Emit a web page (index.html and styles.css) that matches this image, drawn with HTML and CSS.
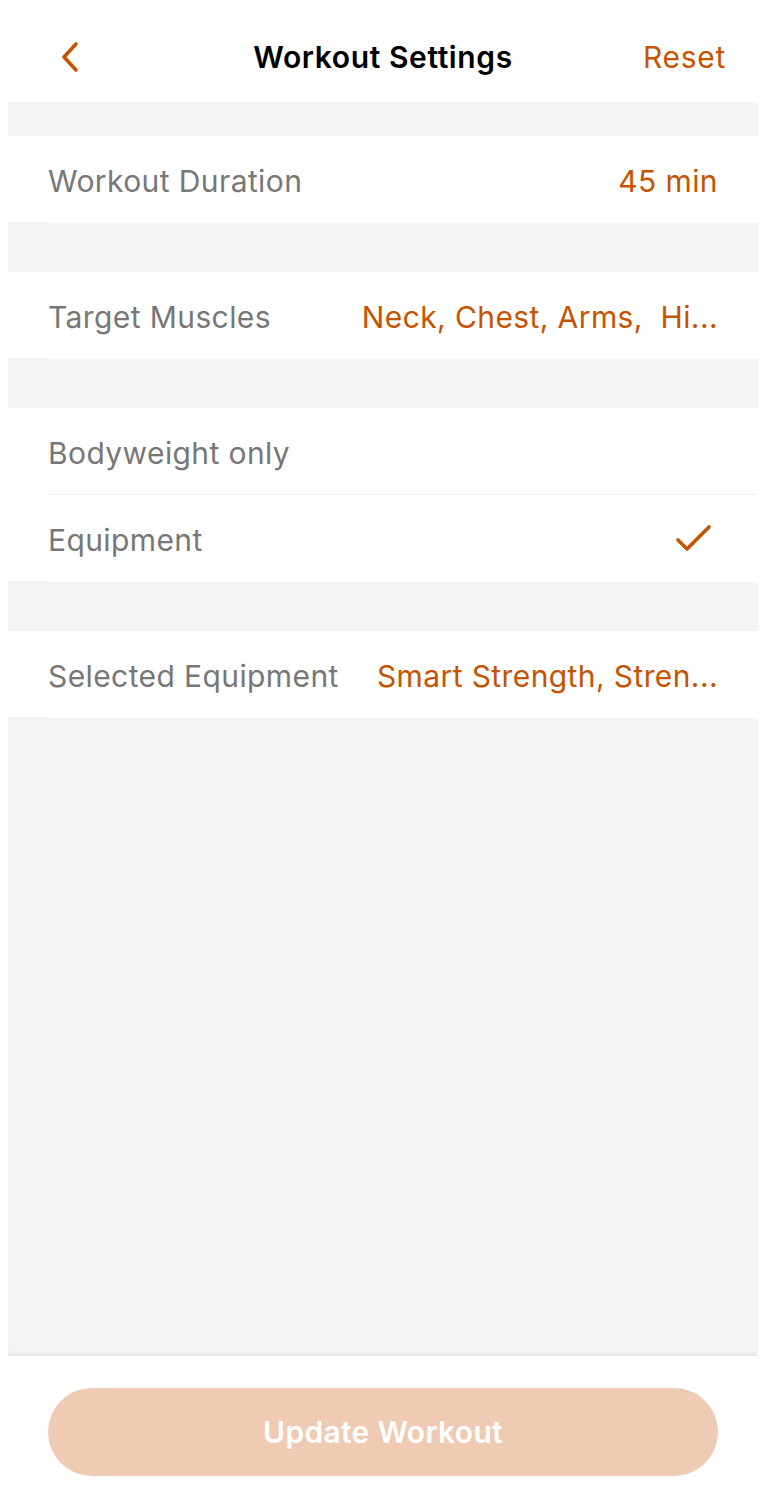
FILE: index.html
```html
<!DOCTYPE html>
<html lang="en">
<head>
<meta charset="utf-8">
<title>Workout Settings</title>
<link rel="stylesheet" href="styles.css">
</head>
<body>
<div class="app">
  <header class="topbar">
    <button class="back" aria-label="Back">
      <svg width="20" height="32" viewBox="0 0 20 32"><polyline points="16,3 4,16 16,29" fill="none" stroke="#c65300" stroke-width="3.6" stroke-linecap="round" stroke-linejoin="round"/></svg>
    </button>
    <h1 class="title">Workout Settings</h1>
    <button class="reset">Reset</button>
  </header>

  <main class="content">
    <div class="spacer spacer-first"></div>
    <section class="group">
      <div class="row">
        <span class="label">Workout Duration</span>
        <span class="value">45 min</span>
      </div>
      <div class="sep sep-end"></div>
    </section>

    <div class="spacer"></div>
    <section class="group">
      <div class="row">
        <span class="label">Target Muscles</span>
        <span class="value">Neck, Chest, Arms,&nbsp; Hi...</span>
      </div>
      <div class="sep sep-end"></div>
    </section>

    <div class="spacer"></div>
    <section class="group">
      <div class="row">
        <span class="label">Bodyweight only</span>
      </div>
      <div class="sep"><div class="sep-line"></div></div>
      <div class="row">
        <span class="label">Equipment</span>
        <svg class="check" width="40" height="32" viewBox="0 0 40 32"><polyline points="4,17 13,26 35,4" fill="none" stroke="#c65300" stroke-width="3.6" stroke-linecap="round" stroke-linejoin="round"/></svg>
      </div>
      <div class="sep sep-end"></div>
    </section>

    <div class="spacer"></div>
    <section class="group">
      <div class="row">
        <span class="label">Selected Equipment</span>
        <span class="value">Smart Strength, Stren...</span>
      </div>
      <div class="sep sep-end"></div>
    </section>
  </main>

  <footer class="footer">
    <button class="update">Update Workout</button>
  </footer>
</div>
</body>
</html>
```

FILE: styles.css
```css
* { box-sizing: border-box; }

html, body { height: 100%; }

body {
  margin: 8px 8px 0;
  background: #ffffff;
  font-family: Inter, "Noto Sans", "Liberation Sans", sans-serif;
}

.app {
  min-height: calc(100vh - 8px);
  display: flex;
  flex-direction: column;
}

.topbar {
  height: 94px;
  display: grid;
  grid-template-columns: 1fr auto 1fr;
  align-items: center;
  padding: 4px 32px 0 32px;
  background: #ffffff;
}

.back {
  justify-self: start;
  margin-left: 20px;
  background: none;
  border: 0;
  padding: 0;
  display: flex;
  align-items: center;
  cursor: pointer;
}

.title {
  margin: 0;
  font-size: 30px;
  font-weight: 600;
  color: #000000;
  letter-spacing: 0.6px;
}

.reset {
  justify-self: end;
  background: none;
  border: 0;
  padding: 0;
  font-family: inherit;
  font-size: 30px;
  font-weight: 400;
  color: #c65300;
  letter-spacing: 0.7px;
  cursor: pointer;
}

.content {
  flex: 1;
  background: #f4f4f4;
  display: flex;
  flex-direction: column;
}

.spacer { height: 49px; }
.spacer-first { height: 34px; }

.row {
  height: 86px;
  display: flex;
  align-items: center;
  justify-content: space-between;
  padding: 4px 40px 0 40px;
  gap: 36px;
  background: #ffffff;
}

.label {
  flex-shrink: 0;
  font-size: 30px;
  letter-spacing: 0.4px;
  color: #777777;
  white-space: nowrap;
}

.value {
  min-width: 0;
  max-width: 362px;
  font-size: 30px;
  letter-spacing: 0.4px;
  color: #c65300;
  white-space: nowrap;
  overflow: hidden;
  text-overflow: ellipsis;
  text-align: right;
}

.check {
  margin-right: 4px;
  margin-top: -2px;
}

.sep {
  height: 1px;
  background: #ffffff;
}

.sep-line {
  height: 1px;
  margin-left: 40px;
  background: #efefef;
}

.sep-end { margin-left: 40px; }

.footer {
  height: 148px;
  background: #ffffff;
  padding: 32px 40px 28px;
  box-shadow: 0 0 6px rgba(0, 0, 0, 0.14);
  position: relative;
}

.update {
  width: 100%;
  height: 88px;
  border: 0;
  border-radius: 44px;
  background: #efcbb4;
  color: #ffffff;
  font-family: inherit;
  font-size: 30px;
  font-weight: 600;
  letter-spacing: 0.3px;
  cursor: pointer;
}
```
